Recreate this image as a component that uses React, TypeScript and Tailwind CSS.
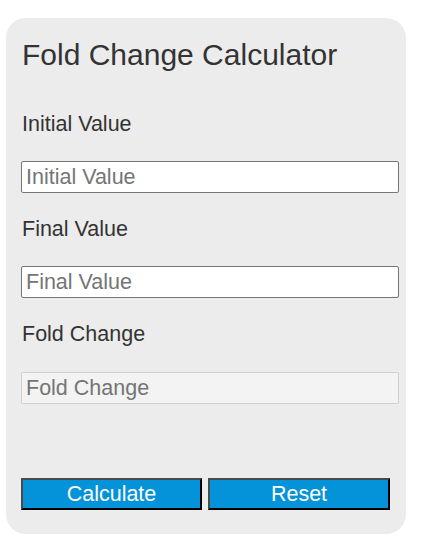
import React from "react";

export default function App() {
  const font = { fontFamily: '"Liberation Sans", Arial, sans-serif' };
  return (
    <div className="w-[425px] h-[552px] bg-white pt-[18px] pl-[6px]" style={font}>
      <div className="w-[400px] h-[516px] rounded-[20px] bg-[#ececec] pt-[19px] pl-[15px] pr-[7px] flex flex-col text-[#333]">
        <div className="h-[36px] leading-[36px] text-[30px] pl-[1px]">Fold Change Calculator</div>
        <div className="mt-[39px] h-[24px] leading-[24px] text-[21.5px] pl-[1px]">Initial Value</div>
        <input
          className="mt-[25px] h-[32px] w-[378px] border border-[#767676] rounded-[2px] bg-white px-[4px] text-[21.5px] placeholder:text-[#757575] outline-none"
          placeholder="Initial Value"
        />
        <div className="mt-[24px] h-[24px] leading-[24px] text-[21.5px] pl-[1px]">Final Value</div>
        <input
          className="mt-[25px] h-[32px] w-[378px] border border-[#767676] rounded-[2px] bg-white px-[4px] text-[21.5px] placeholder:text-[#757575] outline-none"
          placeholder="Final Value"
        />
        <div className="mt-[24px] h-[24px] leading-[24px] text-[21.5px] pl-[1px]">Fold Change</div>
        <input
          readOnly
          className="mt-[26px] h-[32px] w-[378px] border border-[#d0d0d0] rounded-[2px] bg-[#f3f3f3] px-[4px] text-[21.5px] placeholder:text-[#757575] outline-none"
          placeholder="Fold Change"
        />
        <div className="mt-[74px] flex gap-[6px]">
          <button className="w-[181px] h-[32px] bg-[#0492d9] text-white text-[21.5px] leading-[28px] border-2 border-t-[#4a4a4a] border-l-[#4a4a4a] border-b-black border-r-black">
            Calculate
          </button>
          <button className="w-[182px] h-[32px] bg-[#0492d9] text-white text-[21.5px] leading-[28px] border-2 border-t-[#4a4a4a] border-l-[#4a4a4a] border-b-black border-r-black">
            Reset
          </button>
        </div>
      </div>
    </div>
  );
}
